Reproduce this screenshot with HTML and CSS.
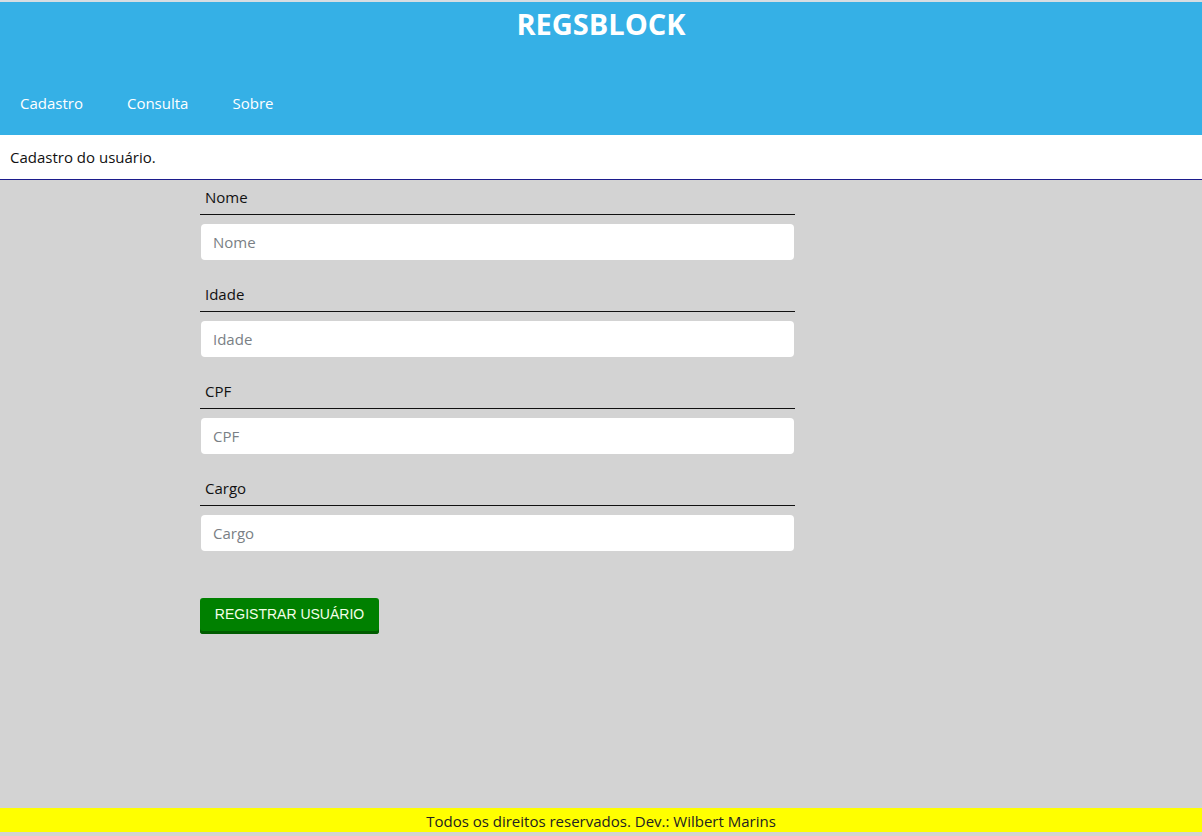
FILE: index.html
```html
<!DOCTYPE html>
<html lang="pt-BR">
<head>
<meta charset="utf-8">
<title>REGSBLOCK</title>
<link rel="stylesheet" href="styles.css">
</head>
<body>
<div class="page">
  <header class="header">
    <h1 class="title">REGSBLOCK</h1>
    <nav class="nav">
      <a class="nav-link" href="#">Cadastro</a>
      <a class="nav-link" href="#">Consulta</a>
      <a class="nav-link" href="#">Sobre</a>
    </nav>
  </header>
  <div class="subbar">Cadastro do usuário.</div>
  <main class="main">
    <form class="form">
      <div class="field">
        <label class="label">Nome</label>
        <input class="input" type="text" placeholder="Nome">
      </div>
      <div class="field">
        <label class="label">Idade</label>
        <input class="input" type="text" placeholder="Idade">
      </div>
      <div class="field">
        <label class="label">CPF</label>
        <input class="input" type="text" placeholder="CPF">
      </div>
      <div class="field">
        <label class="label">Cargo</label>
        <input class="input" type="text" placeholder="Cargo">
      </div>
      <button class="btn" type="button">REGISTRAR USUÁRIO</button>
    </form>
  </main>
  <footer class="footer">Todos os direitos reservados. Dev.: Wilbert Marins</footer>
</div>
</body>
</html>
```
FILE: styles.css
```css
* { box-sizing: border-box; }
html, body { margin: 0; padding: 0; height: 100%; }
body {
  font-family: "Open Sans", "Noto Sans", sans-serif;
  background: #d3d3d3;
  color: #111;
}
.page {
  display: flex;
  flex-direction: column;
  min-height: 836px;
}
.header {
  background: #35b0e6;
  border-top: 2px solid #d6dde2;
  height: 135px;
  display: flex;
  flex-direction: column;
}
.title {
  margin: 0;
  padding-top: 2px;
  text-align: center;
  color: #fff;
  font-size: 29px;
  font-weight: 700;
  line-height: 40px;
}
.nav {
  display: flex;
  padding-left: 20px;
  margin-top: 49px;
}
.nav-link {
  color: #fff;
  text-decoration: none;
  font-size: 15px;
  line-height: 20px;
  margin-right: 44px;
}
.subbar {
  background: #fff;
  height: 45px;
  padding: 12px 10px 0;
  font-size: 15px;
  line-height: 20px;
  color: #111;
  border-bottom: 1px solid #1c1c8c;
}
.main {
  flex: 1;
  padding: 7px 0 0 200px;
}
.form {
  width: 595px;
  display: flex;
  flex-direction: column;
}
.field {
  display: flex;
  flex-direction: column;
  margin-bottom: 24px;
}
.label {
  font-size: 15px;
  line-height: 20px;
  padding: 0 5px 7px;
  border-bottom: 1px solid #111;
  color: #111;
}
.input {
  margin: 9px 1px 0;
  height: 36px;
  border: none;
  border-radius: 4px;
  background: #fff;
  padding: 0 12px;
  font-family: "Open Sans", "Noto Sans", sans-serif;
  font-size: 15px;
  color: #333;
  outline: none;
}
.input::placeholder { color: #7a7f85; }
.btn {
  align-self: flex-start;
  margin-top: 23px;
  width: 179px;
  height: 36px;
  background: #008000;
  color: #f4ffe8;
  border: none;
  border-radius: 3px;
  box-shadow: inset 0 -3px 0 #005c00;
  font-family: "Liberation Sans", Arial, sans-serif;
  font-size: 14px;
  padding: 0 0 5px;
  cursor: pointer;
}
.footer {
  background: #ffff00;
  height: 24px;
  margin-bottom: 4px;
  text-align: center;
  font-size: 15px;
  line-height: 26px;
  color: #222;
}
```
